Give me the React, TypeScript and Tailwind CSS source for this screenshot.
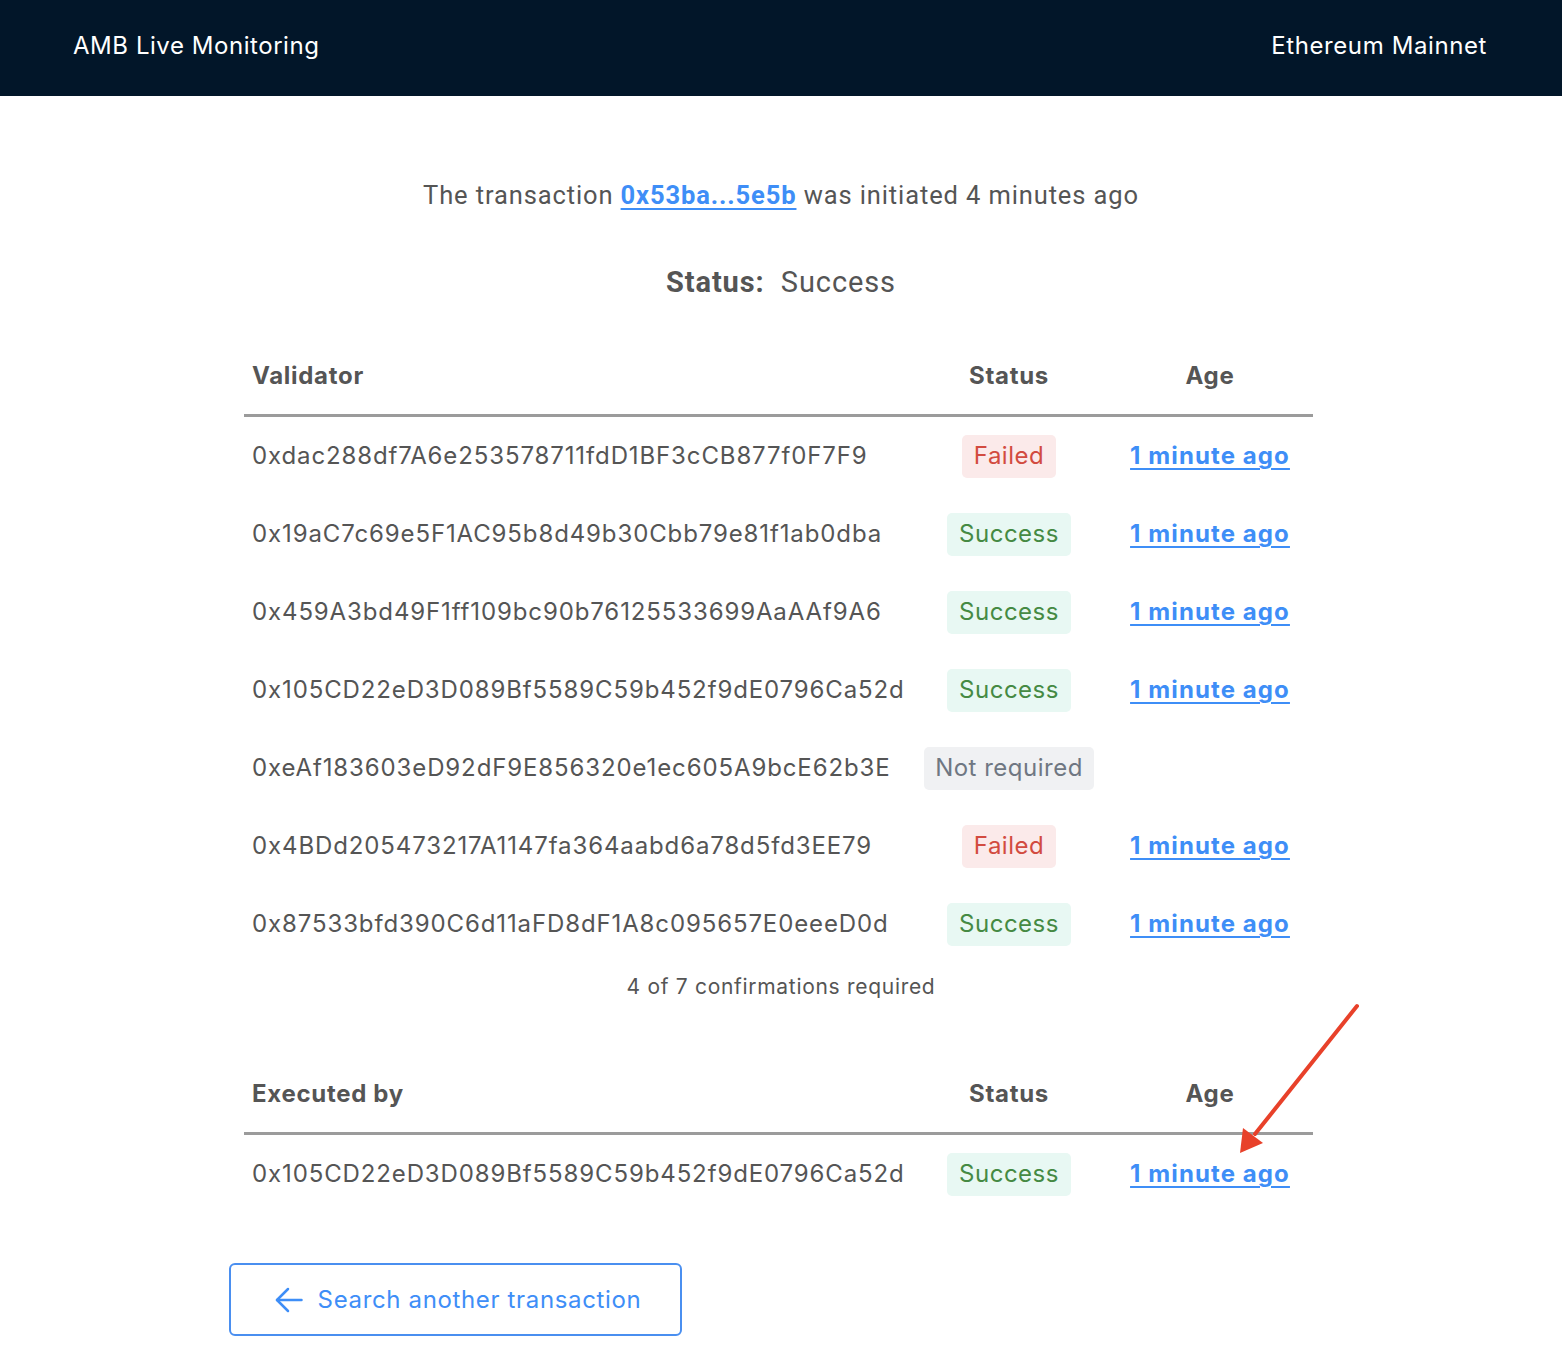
import React from "react";

type Row = { addr: string; status: "Failed" | "Success" | "Not required"; age?: string };

const validators: Row[] = [
  { addr: "0xdac288df7A6e253578711fdD1BF3cCB877f0F7F9", status: "Failed", age: "1 minute ago" },
  { addr: "0x19aC7c69e5F1AC95b8d49b30Cbb79e81f1ab0dba", status: "Success", age: "1 minute ago" },
  { addr: "0x459A3bd49F1ff109bc90b76125533699AaAAf9A6", status: "Success", age: "1 minute ago" },
  { addr: "0x105CD22eD3D089Bf5589C59b452f9dE0796Ca52d", status: "Success", age: "1 minute ago" },
  { addr: "0xeAf183603eD92dF9E856320e1ec605A9bcE62b3E", status: "Not required" },
  { addr: "0x4BDd205473217A1147fa364aabd6a78d5fd3EE79", status: "Failed", age: "1 minute ago" },
  { addr: "0x87533bfd390C6d11aFD8dF1A8c095657E0eeeD0d", status: "Success", age: "1 minute ago" },
];

function Badge({ status }: { status: Row["status"] }) {
  if (status === "Failed")
    return (
      <span className="inline-flex h-[43px] items-center rounded-[5px] bg-[#fbeaea] px-[12px] tracking-[0.5px] text-[#d24b40]">
        Failed
      </span>
    );
  if (status === "Success")
    return (
      <span className="inline-flex h-[43px] items-center rounded-[5px] bg-[#e8f8f3] px-[12px] tracking-[0.5px] text-[#458a43]">
        Success
      </span>
    );
  return (
    <span className="inline-flex h-[43px] items-center whitespace-nowrap rounded-[5px] bg-[#f0f1f3] px-[11px] tracking-[0.5px] text-[#6f7782]">
      Not required
    </span>
  );
}

function Table({ title, rows }: { title: string; rows: Row[] }) {
  return (
    <div className="ml-[16px] mr-[21px] text-[24px] text-[#555555]">
      <div className="grid h-[80px] grid-cols-[685px_160px_1fr] items-center border-b-[3px] border-[#9b9b9b] font-bold tracking-[0.7px]">
        <div className="pl-[8px]">{title}</div>
        <div className="text-center">Status</div>
        <div className="pl-[18px] text-center">Age</div>
      </div>
      {rows.map((r, i) => (
        <div key={i} className="grid h-[78px] grid-cols-[685px_160px_1fr] items-center">
          <div className="whitespace-nowrap pl-[8px] tracking-[0.88px]">{r.addr}</div>
          <div className="flex justify-center">
            <Badge status={r.status} />
          </div>
          <div className="pl-[18px] text-center">
            {r.age && (
              <a href="#" className="font-bold tracking-[1.1px] text-[#3e8ef7] underline decoration-[2px] underline-offset-[4px]">
                {r.age}
              </a>
            )}
          </div>
        </div>
      ))}
    </div>
  );
}

export default function App() {
  return (
    <div className="relative min-h-[1358px] bg-white font-['Inter','Noto_Sans',sans-serif]">
      <header className="flex h-[96px] items-center justify-between bg-[#021629] px-[73px] pb-[4px] text-[24px] text-white">
        <div className="tracking-[0.55px]">AMB Live Monitoring</div>
        <div className="pr-[2px] tracking-[0.6px]">Ethereum Mainnet</div>
      </header>

      <main className="mx-auto w-[1106px]">
        <p className="mt-[79px] text-center font-['Roboto',sans-serif] text-[25.5px] leading-[40px] tracking-[0.88px] text-[#555555]">
          The transaction{" "}
          <a href="#" className="font-bold text-[#3e8ef7] underline decoration-[2px] underline-offset-[4px]">
            0x53ba...5e5b
          </a>{" "}
          was initiated 4 minutes ago
        </p>
        <p className="mt-[47px] text-center font-['Roboto',sans-serif] text-[29px] leading-[40px] tracking-[0.9px] text-[#555555]">
          <span className="font-bold">Status:</span>&nbsp; Success
        </p>

        <div className="mt-[35px]">
          <Table title="Validator" rows={validators} />
        </div>

        <p className="mt-[9px] text-center text-[21px] leading-[30px] tracking-[0.7px] text-[#555555]">
          4 of 7 confirmations required
        </p>

        <div className="mt-[53px]">
          <Table
            title="Executed by"
            rows={[{ addr: "0x105CD22eD3D089Bf5589C59b452f9dE0796Ca52d", status: "Success", age: "1 minute ago" }]}
          />
        </div>

        <button className="ml-[1px] mt-[50px] flex h-[73px] w-[453px] items-center justify-center gap-[15px] rounded-[6px] border-2 border-[#4a8ff0] pl-[5px] text-[24px] tracking-[0.65px] text-[#3e8ef7]">
          <svg width="28" height="26" viewBox="0 0 28 26" fill="none" stroke="currentColor" strokeWidth="2.5" strokeLinecap="round" strokeLinejoin="round">
            <path d="M26.5 13H2" />
            <path d="M13 2L2 13l11 11" />
          </svg>
          <span>Search another transaction</span>
        </button>
      </main>

      <svg className="pointer-events-none absolute left-0 top-0" width="1562" height="1358">
        <line x1="1357" y1="1006" x2="1255" y2="1134" stroke="#e8412a" strokeWidth="4" strokeLinecap="round" />
        <polygon points="1240,1153 1243,1128 1263,1143" fill="#e8412a" />
      </svg>
    </div>
  );
}
